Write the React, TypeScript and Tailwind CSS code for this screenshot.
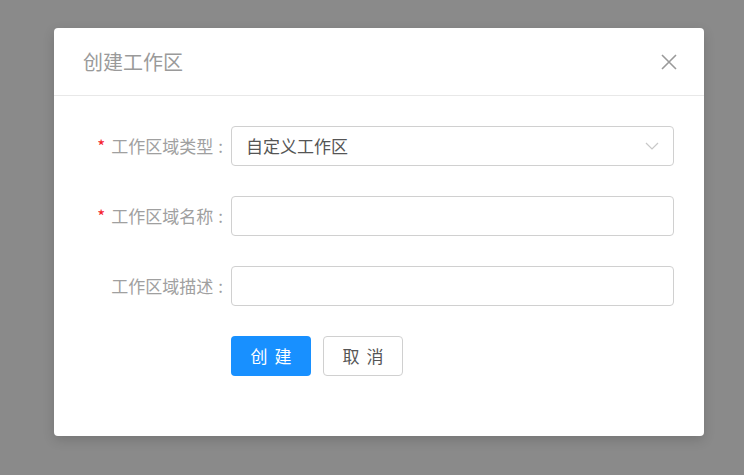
import React from "react";

const font = { fontFamily: '"Noto Sans CJK SC", "Noto Sans", sans-serif' };

function Row({ label, required, children }: { label: string; required?: boolean; children: React.ReactNode }) {
  return (
    <div className="flex items-center h-[40px]">
      <div className="w-[177px] flex justify-end items-center pr-[8px] text-[17px] text-[#a0a0a0]">
        {required && <span className="text-[#f5222d] mr-[6px] text-[17px]">*</span>}
        <span>{label}</span>
        <span className="ml-[5px]">:</span>
      </div>
      <div className="w-[443px] h-[40px]">{children}</div>
    </div>
  );
}

export default function App() {
  return (
    <div className="w-[744px] h-[475px] bg-[#8a8a8a] overflow-hidden pt-[28px] pl-[54px]" style={font}>
      <div className="w-[650px] h-[408px] bg-white rounded-[4px] shadow-[0_4px_12px_rgba(0,0,0,0.15)]">
        <div className="h-[68px] border-b border-[#e8e8e8] flex items-center justify-between pl-[29px] pr-[26px]">
          <span className="text-[20px] text-[#9a9a9a]">创建工作区</span>
          <svg width="18" height="18" viewBox="0 0 18 18" fill="none" stroke="#9a9a9a" strokeWidth="1.6">
            <path d="M2 2L16 16M16 2L2 16" />
          </svg>
        </div>
        <div className="pt-[30px] flex flex-col gap-[30px]">
          <Row label="工作区域类型" required>
            <div className="h-full border border-[#d0d0d0] rounded-[4px] flex items-center justify-between pl-[14px] pr-[14px] text-[17px] text-[#555]">
              <span>自定义工作区</span>
              <svg width="14" height="8" viewBox="0 0 14 8" fill="none" stroke="#c8c8c8" strokeWidth="1.2">
                <path d="M1 1L7 7L13 1" />
              </svg>
            </div>
          </Row>
          <Row label="工作区域名称" required>
            <div className="h-full border border-[#d0d0d0] rounded-[4px]" />
          </Row>
          <Row label="工作区域描述">
            <div className="h-full border border-[#d0d0d0] rounded-[4px]" />
          </Row>
          <div className="flex gap-[12px] pl-[177px]">
            <button className="w-[80px] h-[40px] rounded-[4px] bg-[#1890ff] text-white text-[17px] tracking-[7px] pl-[7px]">创建</button>
            <button className="w-[80px] h-[40px] rounded-[4px] border border-[#d0d0d0] bg-white text-[#555] text-[17px] tracking-[7px] pl-[7px]">取消</button>
          </div>
        </div>
      </div>
    </div>
  );
}
